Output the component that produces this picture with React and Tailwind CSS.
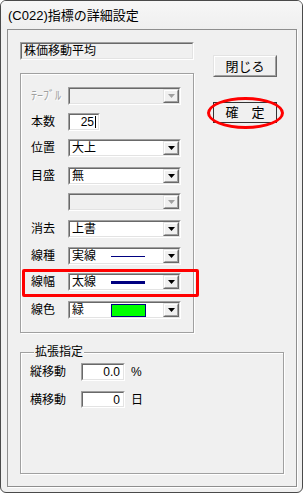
import React from 'react';

// ─── クラシック立体枠 ──────────────────────────────────────────────
function Sunken({ className = '', bg = 'bg-white', children }) {
  return (
    <div className={`border border-t-[#a0a0a0] border-l-[#a0a0a0] border-r-white border-b-white ${className}`}>
      <div className={`w-full h-full border border-t-[#696969] border-l-[#696969] border-r-[#e3e3e3] border-b-[#e3e3e3] ${bg}`}>
        {children}
      </div>
    </div>
  );
}

function Raised({ className = '', children }) {
  return (
    <div className={`border border-t-[#e3e3e3] border-l-[#e3e3e3] border-r-[#696969] border-b-[#696969] ${className}`}>
      <div className="w-full h-full border border-t-white border-l-white border-r-[#a0a0a0] border-b-[#a0a0a0] bg-[#f0f0f0] flex items-center justify-center">
        {children}
      </div>
    </div>
  );
}

function Arrow({ disabled }) {
  return (
    <Raised className="w-[16px] h-[14px] shrink-0">
      <svg width="7" height="4" viewBox="0 0 7 4">
        <path d="M0 0h7L3.5 4z" fill={disabled ? '#a0a0a0' : '#000'} />
      </svg>
    </Raised>
  );
}

function Combo({ text, sample, disabled }) {
  return (
    <Sunken className="w-[113px] h-[18px]" bg={disabled ? 'bg-[#f0f0f0]' : 'bg-white'}>
      <div className="flex items-center h-full">
        <div className="flex-1 flex items-center pl-[2px] text-[12px] leading-none text-black">
          <span className="w-[39px]">{text}</span>
          {sample === 'thin' && <div className="w-[34px] h-[1px] bg-[#000080]" />}
          {sample === 'thick' && <div className="w-[34px] h-[3px] bg-[#000080]" />}
          {sample === 'green' && <div className="w-[35px] h-[13px] bg-[#00ff00] border border-[#000080]" />}
        </div>
        <Arrow disabled={disabled} />
      </div>
    </Sunken>
  );
}

const rows = [
  { label: 'ﾃｰﾌﾞﾙ', mt: 'mt-0', disabled: true },
  { label: '本数', mt: 'mt-[8px]', input: '25' },
  { label: '位置', mt: 'mt-[8px]', text: '大上' },
  { label: '目盛', mt: 'mt-[10px]', text: '無' },
  { label: '', mt: 'mt-[8px]', disabled: true },
  { label: '消去', mt: 'mt-[9px]', text: '上書' },
  { label: '線種', mt: 'mt-[9px]', text: '実線', sample: 'thin' },
  { label: '線幅', mt: 'mt-[8px]', text: '太線', sample: 'thick' },
  { label: '線色', mt: 'mt-[10px]', text: '緑', sample: 'green' },
];

export default function App() {
  return (
    <div className="w-[304px] h-[494px] bg-white font-['Liberation_Sans','Noto_Sans_CJK_JP',sans-serif] text-black">
      <div className="relative w-[303px] h-[493px] rounded-[6px] border border-[#4a4a4a] bg-[#f0f0f0] flex flex-col overflow-hidden">

        {/* タイトルバー */}
        <div className="h-[28px] pl-[7px] flex items-center text-[13px] leading-none bg-gradient-to-b from-[#f7f7f7] to-[#efefef]">
          (C022)指標の詳細設定
        </div>

        {/* 本体パネル */}
        <div className="ml-[6px] w-[290px] h-[458px] border border-[#8e8e8e] shadow-[1px_1px_0_#fff] bg-[#f0f0f0] flex flex-col">
          <div className="flex">
            {/* 左列 */}
            <div className="ml-[12px] mt-[12px] w-[174px] flex flex-col">
              <Sunken className="w-[174px] h-[18px]" bg="bg-[#f0f0f0]">
                <div className="h-full flex items-center pl-[2px] text-[12px] leading-none">株価移動平均</div>
              </Sunken>

              <div className="mt-[13px] w-[174px] h-[260px] border border-[#a0a0a0] shadow-[1px_1px_0_#fff,inset_1px_1px_0_#fff] pt-[13px] pl-[10px] flex flex-col">
                {rows.map((r, i) => (
                  <div key={i} className={`${r.mt} h-[18px] flex items-center`}>
                    <span
                      className={`w-[37px] text-[12px] leading-none whitespace-nowrap ${
                        r.disabled ? 'text-[#a0a0a0] [text-shadow:1px_1px_0_#fff]' : ''
                      }`}
                    >
                      {r.label}
                    </span>
                    {r.input ? (
                      <Sunken className="w-[32px] h-[18px]">
                        <div className="h-full flex items-center justify-end pr-[2px] text-[12px] leading-none">
                          {r.input}
                          <span className="ml-[1px] w-[1px] h-[12px] bg-black" />
                        </div>
                      </Sunken>
                    ) : (
                      <Combo text={r.text} sample={r.sample} disabled={r.disabled} />
                    )}
                  </div>
                ))}
              </div>
            </div>

            {/* ボタン列 */}
            <div className="ml-[19px] mt-[25px] flex flex-col">
              <Raised className="w-[64px] h-[22px]">
                <span className="text-[13px] leading-none">閉じる</span>
              </Raised>
              <div className="mt-[25px] w-[64px] h-[21px] border border-[#333] bg-[#f0f0f0] flex items-center justify-center">
                <span className="text-[13px] leading-none">確　定</span>
              </div>
            </div>
          </div>

          {/* 拡張指定 */}
          <div className="ml-[12px] mt-[19px] w-[264px] h-[122px] border border-[#a0a0a0] shadow-[1px_1px_0_#fff,inset_1px_1px_0_#fff] flex flex-col">
            <span className="-mt-[8px] ml-[13px] px-[1px] w-fit bg-[#f0f0f0] text-[12px] leading-[14px]">拡張指定</span>
            <div className="mt-[4px] pl-[9px] h-[18px] flex items-center">
              <span className="w-[51px] text-[12px] leading-none">縦移動</span>
              <Sunken className="w-[44px] h-[18px]">
                <div className="h-full flex items-center justify-end pr-[3px] text-[12px] leading-none">0.0</div>
              </Sunken>
              <span className="ml-[6px] text-[12px] leading-none">%</span>
            </div>
            <div className="mt-[10px] pl-[9px] h-[17px] flex items-center">
              <span className="w-[51px] text-[12px] leading-none">横移動</span>
              <Sunken className="w-[44px] h-[17px]">
                <div className="h-full flex items-center justify-end pr-[3px] text-[12px] leading-none">0</div>
              </Sunken>
              <span className="ml-[6px] text-[12px] leading-none">日</span>
            </div>
          </div>
        </div>

        {/* 赤い注釈 */}
        <div className="absolute left-[21px] top-[268px] w-[177px] h-[28px] border-[3px] border-[#ff0000] rounded-[2px]" />
        <div className="absolute left-[206px] top-[96px] w-[77px] h-[32px] border-[3px] border-[#ff0000] rounded-[50%]" />
      </div>
    </div>
  );
}
